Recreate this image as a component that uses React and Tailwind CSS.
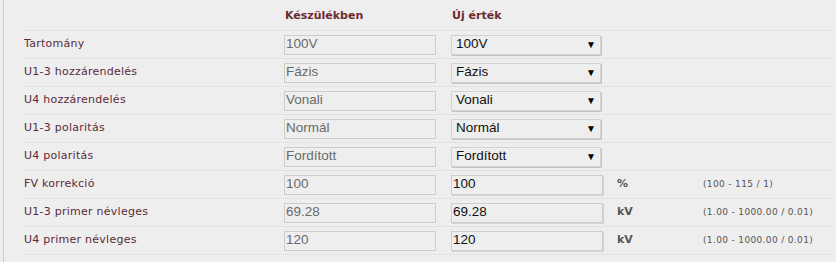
import React from 'react';

const rows = [
  { label: 'Tartomány', current: '100V', value: '100V', type: 'select' },
  { label: 'U1-3 hozzárendelés', current: 'Fázis', value: 'Fázis', type: 'select' },
  { label: 'U4 hozzárendelés', current: 'Vonali', value: 'Vonali', type: 'select' },
  { label: 'U1-3 polaritás', current: 'Normál', value: 'Normál', type: 'select' },
  { label: 'U4 polaritás', current: 'Fordított', value: 'Fordított', type: 'select' },
  { label: 'FV korrekció', current: '100', value: '100', type: 'input', unit: '%', range: '(100 - 115 / 1)' },
  { label: 'U1-3 primer névleges', current: '69.28', value: '69.28', type: 'input', unit: 'kV', range: '(1.00 - 1000.00 / 0.01)' },
  { label: 'U4 primer névleges', current: '120', value: '120', type: 'input', unit: 'kV', range: '(1.00 - 1000.00 / 0.01)' },
];

const verdana = "font-['DejaVu_Sans',Verdana,sans-serif]";
const arial = "font-['Liberation_Sans',Arial,sans-serif]";

const Row = ({ row }) => (
  <div className="flex h-[28px] items-center border-b border-dotted border-[#d4d4d4]">
    <div className={`w-[261px] pl-[1px] text-[11px] tracking-[0.25px] text-[#5b2b38] ${verdana}`}>{row.label}</div>
    {/* value stored in the device, read only */}
    <div
      className={`flex h-[20px] w-[152px] items-center border border-[#cdcdcd] bg-[#eeeeee] px-[1px] text-[13.5px] text-[#6a6a6a] ${arial}`}
    >
      {row.current}
    </div>
    {row.type === 'select' ? (
      <div
        className={`ml-[15px] flex h-[20px] w-[150px] items-center justify-between border border-[#d2d2d2] bg-[#eeeeee] pl-[4px] pr-[4px] text-[13.5px] text-[#111] shadow-[1px_1px_0_#c4c4c4] ${arial}`}
      >
        <span>{row.value}</span>
        <span className="text-[10px] leading-none text-black">▼</span>
      </div>
    ) : (
      <>
        <div
          className={`ml-[15px] flex h-[20px] w-[152px] items-center border border-[#cdcdcd] bg-[#eeeeee] px-[1px] text-[13.5px] text-[#111] shadow-[1px_1px_0_#d4d4d4] ${arial}`}
        >
          {row.value}
        </div>
        <div className={`ml-[14px] w-[86px] text-[11px] font-bold text-[#555] ${verdana}`}>{row.unit}</div>
        <div className={`text-[9px] tracking-[0.35px] text-[#555] ${verdana}`}>{row.range}</div>
      </>
    )}
  </div>
);

export default function App() {
  return (
    <div className="h-[262px] w-[836px] overflow-hidden bg-[#eeeeee]">
      <div className="ml-[3px] h-full border-l border-[#cccccc] pl-[19px] pr-[2px]">
        <div className="flex h-[31px] items-center border-b border-dotted border-[#d4d4d4] pt-[2px]">
          <div className="w-[262px]" />
          <div className={`w-[167px] text-[11px] font-bold text-[#6b2a2e] ${verdana}`}>Készülékben</div>
          <div className={`text-[11px] font-bold text-[#6b2a2e] ${verdana}`}>Új érték</div>
        </div>
        {rows.map((row) => (
          <Row key={row.label} row={row} />
        ))}
      </div>
    </div>
  );
}
